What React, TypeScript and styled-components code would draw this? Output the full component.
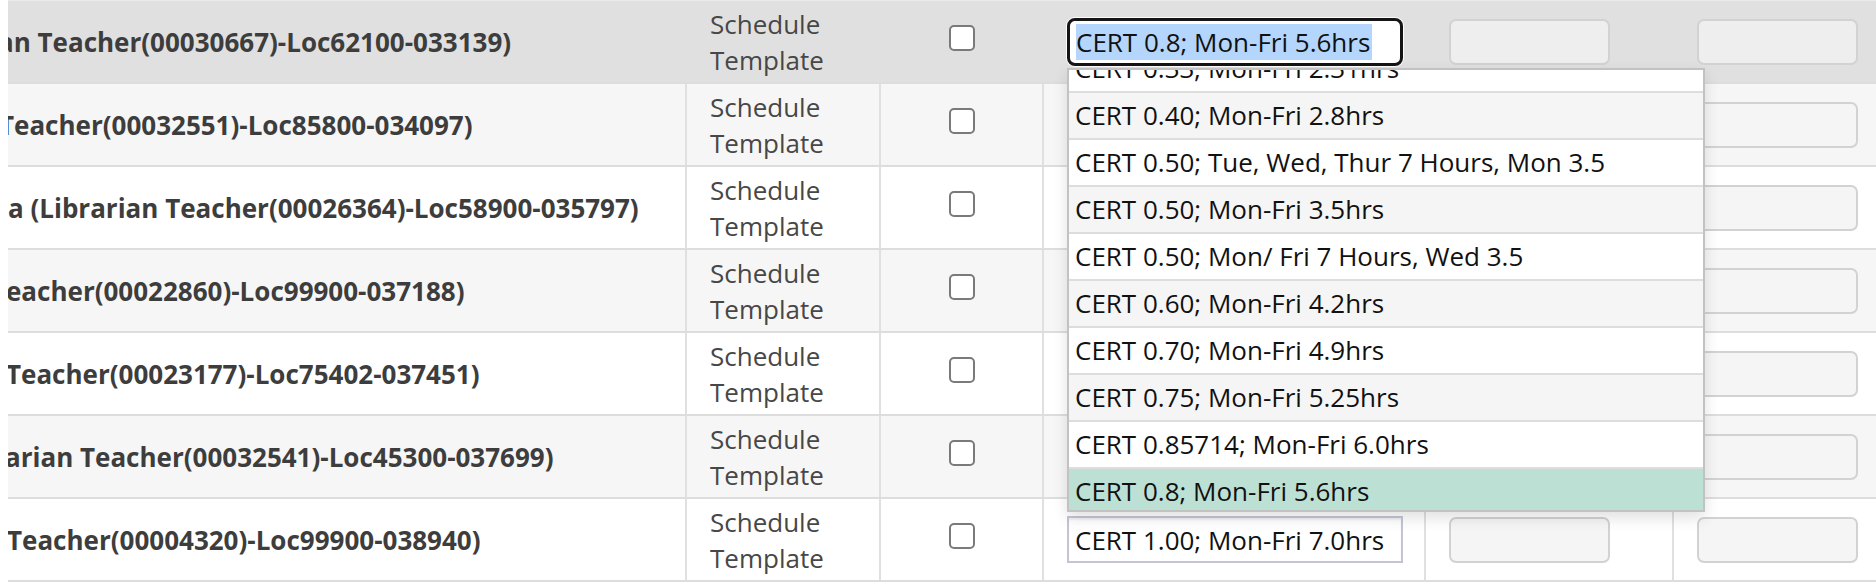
import React from 'react';
import styled, { createGlobalStyle } from 'styled-components';

const GlobalStyle = createGlobalStyle`
    html, body {
        margin: 0;
        padding: 0;
        background: #ffffff;
        overflow: hidden;
    }

    body {
        font-family: "Open Sans", "Noto Sans", "Liberation Sans", sans-serif;
        color: #444444;
    }
`;

const Page = styled.div`
    padding-left: 8px;
    width: 1876px;
    box-sizing: border-box;
`;

const Table = styled.div`
    display: flex;
    flex-direction: column;
    border-top: 1px solid #ebebeb;
`;

const Row = styled.div<{ $bg: string }>`
    display: grid;
    grid-template-columns: 679px 194px 163px 382px 248px 1fr;
    height: 83px;
    box-sizing: border-box;
    border-bottom: 2px solid #dddddd;
    background: ${(p) => p.$bg};
`;

const Cell = styled.div`
    box-sizing: border-box;
    border-right: 2px solid #e0e0e0;
    display: flex;
    align-items: center;
    min-width: 0;

    &:last-child {
        border-right: none;
    }
`;

const NameCell = styled(Cell)`
    overflow: hidden;
    white-space: nowrap;
`;

const NameText = styled.span<{ $shift: number }>`
    margin-left: ${(p) => p.$shift}px;
    font-size: 26px;
    font-weight: 700;
    color: #3d3d3d;
`;

const ScheduleCell = styled(Cell)`
    padding: 0 22px 0 23px;
    font-size: 26px;
    line-height: 36px;
    color: #474747;
`;

const CheckCell = styled(Cell)`
    justify-content: center;
`;

const CheckBox = styled.span`
    width: 26px;
    height: 26px;
    box-sizing: border-box;
    border: 2px solid #7a7a7a;
    border-radius: 5px;
    background: #ffffff;
    margin: 0 0 7px 1px;
`;

const SelectCell = styled(Cell)`
    position: relative;
    padding-left: 23px;
`;

const SelectBox = styled.div`
    width: 336px;
    height: 47px;
    box-sizing: border-box;
    border: 2px solid #c3c4d6;
    background: #ffffff;
    box-shadow: inset 0 2px 2px rgba(0, 0, 0, 0.06);
    display: flex;
    align-items: center;
    padding-left: 6px;
    font-size: 26px;
    color: #111111;
    white-space: nowrap;
`;

const FocusedSelect = styled.div`
    width: 336px;
    height: 48px;
    box-sizing: border-box;
    border: 3px solid #151515;
    border-radius: 8px;
    background: #ffffff;
    box-shadow: 0 0 0 1px rgba(255, 255, 255, 0.9);
    display: flex;
    align-items: center;
    padding-left: 6px;
    font-size: 26px;
    color: #111111;
    white-space: nowrap;
`;

const Highlight = styled.span`
    background: #b4d6fd;
    line-height: 36px;
    padding-right: 2px;
`;

const Dropdown = styled.div`
    position: absolute;
    top: 67px;
    left: 23px;
    width: 638px;
    height: 444px;
    box-sizing: border-box;
    border: 2px solid #c2c2c2;
    background: #ffffff;
    box-shadow: 0 6px 14px rgba(0, 0, 0, 0.12);
    overflow: hidden;
    z-index: 10;
`;

const OptionList = styled.div`
    margin-top: -24px;
    display: flex;
    flex-direction: column;
`;

const Option = styled.div<{ $alt: boolean; $active: boolean }>`
    height: 47px;
    flex-shrink: 0;
    box-sizing: border-box;
    border-bottom: 2px solid #dddddd;
    padding: 0 6px;
    line-height: 45px;
    font-size: 26px;
    color: #111111;
    white-space: nowrap;
    background: ${(p) => (p.$active ? '#bde0d5' : p.$alt ? '#f5f5f5' : '#ffffff')};

    &:last-child {
        border-bottom: none;
    }
`;

const FieldCell = styled(Cell)`
    padding-left: 23px;
`;

const Field = styled.div<{ $dark: boolean }>`
    width: 161px;
    height: 46px;
    box-sizing: border-box;
    border: 2px solid #d2d2d2;
    border-radius: 7px;
    background: ${(p) => (p.$dark ? '#eeeeee' : '#f5f5f5')};
`;

// rows 2-6 sit under the open list, so their select value isn't drawn
const rows = [
    { name: 'an Teacher(00030667)-Loc62100-033139)', shift: -10, value: 'CERT 0.8; Mon-Fri 5.6hrs' },
    { name: 'Teacher(00032551)-Loc85800-034097)', shift: -9, value: '' },
    { name: 'a (Librarian Teacher(00026364)-Loc58900-035797)', shift: 0, value: '' },
    { name: 'eacher(00022860)-Loc99900-037188)', shift: -2, value: '' },
    { name: 'Teacher(00023177)-Loc75402-037451)', shift: -2, value: '' },
    { name: 'arian Teacher(00032541)-Loc45300-037699)', shift: -3, value: '' },
    { name: 'Teacher(00004320)-Loc99900-038940)', shift: -1, value: 'CERT 1.00; Mon-Fri 7.0hrs' },
];

const options = [
    'CERT 0.33; Mon-Fri 2.31hrs',
    'CERT 0.40; Mon-Fri 2.8hrs',
    'CERT 0.50; Tue, Wed, Thur 7 Hours, Mon 3.5',
    'CERT 0.50; Mon-Fri 3.5hrs',
    'CERT 0.50; Mon/ Fri 7 Hours, Wed 3.5',
    'CERT 0.60; Mon-Fri 4.2hrs',
    'CERT 0.70; Mon-Fri 4.9hrs',
    'CERT 0.75; Mon-Fri 5.25hrs',
    'CERT 0.85714; Mon-Fri 6.0hrs',
    'CERT 0.8; Mon-Fri 5.6hrs',
];

const rowBackground = (index: number) => {
    if (index === 0) return '#e0e0e0';
    return index % 2 === 1 ? '#f6f6f6' : '#ffffff';
};

const App = () => {
    return (
        <Page>
            <GlobalStyle />
            <Table>
                {rows.map((row, index) => (
                    <Row key={index} $bg={rowBackground(index)}>
                        <NameCell>
                            <NameText $shift={row.shift}>{row.name}</NameText>
                        </NameCell>
                        <ScheduleCell>
                            Schedule
                            <br />
                            Template
                        </ScheduleCell>
                        <CheckCell>
                            <CheckBox />
                        </CheckCell>
                        <SelectCell>
                            {index === 0 ? (
                                <>
                                    <FocusedSelect>
                                        <Highlight>{row.value}</Highlight>
                                    </FocusedSelect>
                                    <Dropdown>
                                        <OptionList>
                                            {options.map((opt, i) => (
                                                <Option key={i} $alt={i % 2 === 1} $active={i === options.length - 1}>
                                                    {opt}
                                                </Option>
                                            ))}
                                        </OptionList>
                                    </Dropdown>
                                </>
                            ) : (
                                <SelectBox>{row.value}</SelectBox>
                            )}
                        </SelectCell>
                        <FieldCell>
                            <Field $dark={index === 0} />
                        </FieldCell>
                        <FieldCell>
                            <Field $dark={index === 0} />
                        </FieldCell>
                    </Row>
                ))}
            </Table>
        </Page>
    );
};

export default App;
